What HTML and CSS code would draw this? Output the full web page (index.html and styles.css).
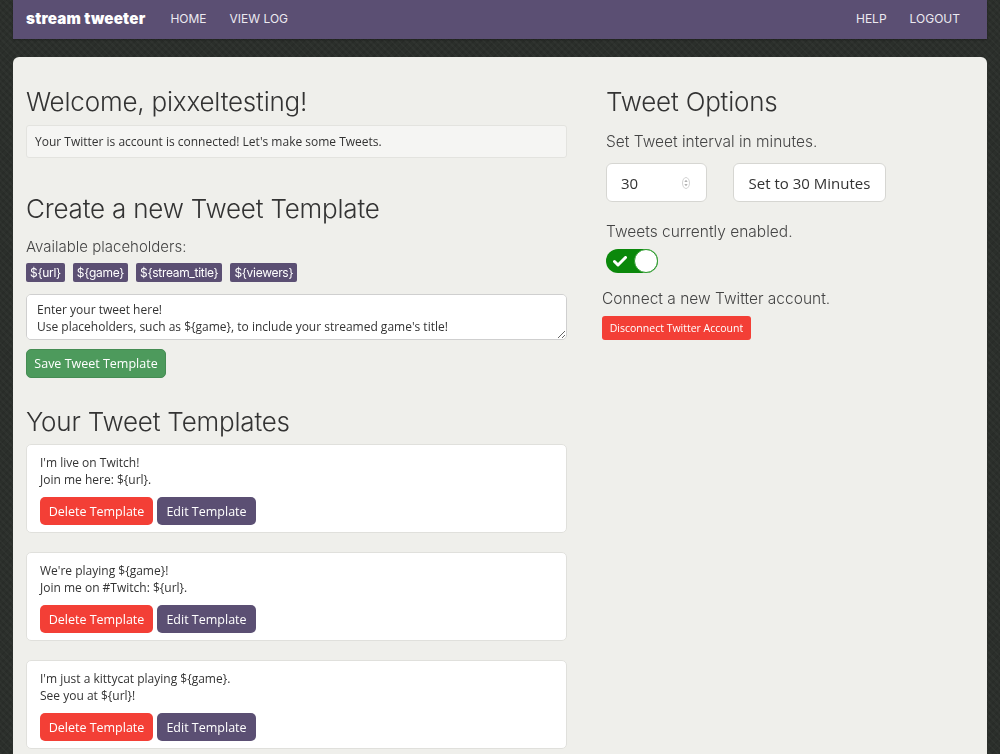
FILE: index.html
```html
<!DOCTYPE html>
<html>
<head>
<meta charset="utf-8">
<title>stream tweeter</title>
<link rel="stylesheet" href="styles.css">
</head>
<body>
<nav class="navbar">
  <span class="brand">stream tweeter</span>
  <a class="nav-link">HOME</a>
  <a class="nav-link">VIEW LOG</a>
  <span class="spacer"></span>
  <a class="nav-link">HELP</a>
  <a class="nav-link">LOGOUT</a>
</nav>
<main class="panel">
  <section class="col-left">
    <h1 class="heading first">Welcome, pixxeltesting!</h1>
    <div class="alert">Your Twitter is account is connected! Let's make some Tweets.</div>
    <h2 class="heading create">Create a new Tweet Template</h2>
    <p class="label placeholders-label">Available placeholders:</p>
    <div class="badges">
      <span class="badge">${url}</span>
      <span class="badge">${game}</span>
      <span class="badge">${stream_title}</span>
      <span class="badge">${viewers}</span>
    </div>
    <textarea class="tweet-input" placeholder="Enter your tweet here!&#10;Use placeholders, such as ${game}, to include your streamed game's title!"></textarea>
    <button class="btn btn-green">Save Tweet Template</button>
    <h2 class="heading templates">Your Tweet Templates</h2>
    <div class="cards">
      <div class="card">
        <p class="card-text">I'm live on Twitch!<br>Join me here: ${url}.</p>
        <div class="card-actions">
          <button class="btn btn-red">Delete Template</button>
          <button class="btn btn-purple">Edit Template</button>
        </div>
      </div>
      <div class="card">
        <p class="card-text">We're playing ${game}!<br>Join me on #Twitch: ${url}.</p>
        <div class="card-actions">
          <button class="btn btn-red">Delete Template</button>
          <button class="btn btn-purple">Edit Template</button>
        </div>
      </div>
      <div class="card">
        <p class="card-text">I'm just a kittycat playing ${game}.<br>See you at ${url}!</p>
        <div class="card-actions">
          <button class="btn btn-red">Delete Template</button>
          <button class="btn btn-purple">Edit Template</button>
        </div>
      </div>
    </div>
  </section>
  <section class="col-right">
    <h2 class="heading first indent">Tweet Options</h2>
    <p class="label interval-label indent">Set Tweet interval in minutes.</p>
    <div class="interval-row indent">
      <div class="number-input">
        <span>30</span>
        <svg class="spinner" width="8" height="12" viewBox="0 0 8 12"><ellipse cx="4" cy="6" rx="3.5" ry="5.5" fill="none" stroke="#c8c8c8" stroke-width="0.8"/><path d="M2.3 4.8 L4 3 L5.7 4.8 Z M2.3 7.2 L4 9 L5.7 7.2 Z" fill="#9a9a9a"/></svg>
      </div>
      <button class="btn btn-white">Set to 30 Minutes</button>
    </div>
    <p class="label enabled-label indent">Tweets currently enabled.</p>
    <div class="toggle indent">
      <svg class="check" width="14" height="11" viewBox="0 0 14 11"><path d="M1.5 5.5 L5 9 L12.5 1.5" fill="none" stroke="#fff" stroke-width="3" stroke-linecap="round" stroke-linejoin="round"/></svg>
      <span class="knob"></span>
    </div>
    <p class="label connect-label">Connect a new Twitter account.</p>
    <button class="btn btn-red btn-small">Disconnect Twitter Account</button>
  </section>
</main>
</body>
</html>
```

FILE: styles.css
```css
* { box-sizing: border-box; }
html, body { margin: 0; padding: 0; }
body {
  background-color: #2b2f2b;
  background-image:
    repeating-linear-gradient(45deg, rgba(255,255,255,0.025) 0 2px, transparent 2px 5px),
    repeating-linear-gradient(-45deg, rgba(0,0,0,0.08) 0 2px, transparent 2px 5px);
  font-family: "Open Sans", "Liberation Sans", sans-serif;
  color: #333;
  height: 754px;
  overflow: hidden;
  padding: 0 13px;
}
.navbar {
  height: 39px;
  background: #5b4f73;
  display: flex;
  align-items: center;
  padding: 0 13px;
  box-shadow: 0 1px 2px rgba(0,0,0,0.3);
}
.brand {
  font-family: "Inter", sans-serif;
  font-weight: 900;
  font-size: 15.2px;
  color: #fff;
  margin-right: 25px;
  letter-spacing: 0.2px;
  padding-bottom: 2px;
}
.nav-link {
  font-family: "Inter", sans-serif;
  font-size: 12px;
  color: #eceaf1;
  margin-right: 23px;
  padding-bottom: 2px;
}
.nav-link:last-child { margin-right: 14px; }
.spacer { flex: 1; }
.panel {
  margin-top: 18px;
  background: #efefeb;
  border-radius: 6px 6px 0 0;
  padding: 13px 13px 40px;
  display: flex;
  min-height: 720px;
}
.col-left { width: 541px; }
.col-right { margin-left: 35px; flex: 1; }
.heading {
  font-family: "Inter", sans-serif;
  font-weight: 300;
  font-size: 26px;
  line-height: 31px;
  color: #333;
  margin: 0;
  letter-spacing: -0.2px;
}
.heading.first { margin-top: 16px; }
.heading.create { margin-top: 35px; }
.heading.templates { margin-top: 28px; }
.label {
  font-family: "Inter", sans-serif;
  font-weight: 300;
  font-size: 15px;
  line-height: 20px;
  color: #444;
  margin: 0;
}
.placeholders-label { margin-top: 13px; }
.interval-label { margin-top: 15px; font-size: 15.5px; }
.enabled-label { margin-top: 20px; font-size: 15.5px; }
.connect-label { margin-top: 16px; font-size: 15.5px; }
.indent { margin-left: 4px; }
.alert {
  margin-top: 8px;
  height: 33px;
  background: #f5f5f3;
  border: 1px solid #e3e3df;
  border-radius: 3px;
  font-size: 12px;
  line-height: 31px;
  padding: 0 8px;
  color: #333;
}
.badges {
  display: flex;
  gap: 8px;
  margin-top: 6px;
}
.badge {
  background: #5b4f73;
  color: #fff;
  font-family: "Inter", sans-serif;
  font-size: 12px;
  height: 19px;
  line-height: 19px;
  padding: 0 4px;
  border-radius: 2px;
  letter-spacing: -0.3px;
}
.tweet-input {
  display: block;
  margin-top: 12px;
  width: 541px;
  height: 46px;
  border: 1px solid #cfcfcf;
  border-radius: 5px;
  background: #fff;
  padding: 6px 10px;
  font-family: "Open Sans", sans-serif;
  font-size: 12px;
  line-height: 17px;
  resize: vertical;
}
.tweet-input::placeholder { color: #333; opacity: 1; }
.btn {
  border: none;
  font-family: "Open Sans", sans-serif;
  font-size: 12.5px;
  color: #fff;
  border-radius: 5px;
  padding: 0;
  white-space: nowrap;
  cursor: pointer;
}
.btn-green {
  display: block;
  margin-top: 9px;
  height: 29px;
  width: 140px;
  background: #4d9a5c;
  border: 1px solid #458c53;
}
.cards {
  margin-top: 7px;
  display: flex;
  flex-direction: column;
  gap: 19px;
}
.card {
  background: #fff;
  border: 1px solid #e0e0dc;
  border-radius: 5px;
  height: 89px;
  padding: 9px 13px 0;
}
.card-text {
  margin: 0;
  font-size: 12px;
  line-height: 17px;
  color: #333;
}
.card-actions {
  display: flex;
  gap: 4px;
  margin-top: 9px;
}
.card-actions .btn { height: 28px; }
.btn-red { background: #f33f36; width: 113px; }
.btn-purple { background: #5b4f73; width: 99px; }
.interval-row {
  display: flex;
  gap: 26px;
  margin-top: 11px;
}
.number-input {
  width: 101px;
  height: 39px;
  background: #fff;
  border: 1px solid #d6d6d2;
  border-radius: 6px;
  display: flex;
  align-items: center;
  justify-content: space-between;
  padding: 0 16px 0 14px;
  font-size: 15px;
  color: #333;
}
.btn-white {
  height: 39px;
  width: 153px;
  background: #fff;
  border: 1px solid #d6d6d2;
  border-radius: 6px;
  color: #333;
  font-size: 15px;
}
.toggle {
  margin-top: 7px;
  width: 52px;
  height: 24px;
  border-radius: 12px;
  background: #0b880b;
  position: relative;
  display: flex;
  align-items: center;
  padding-left: 7px;
}
.knob {
  position: absolute;
  right: 0;
  top: 0;
  width: 24px;
  height: 24px;
  border-radius: 50%;
  background: #fff;
  border: 1px solid #2f9c2f;
}
.btn-small {
  display: block;
  margin-top: 7px;
  height: 24px;
  width: 149px;
  font-size: 10.5px;
  border-radius: 3px;
}
```
